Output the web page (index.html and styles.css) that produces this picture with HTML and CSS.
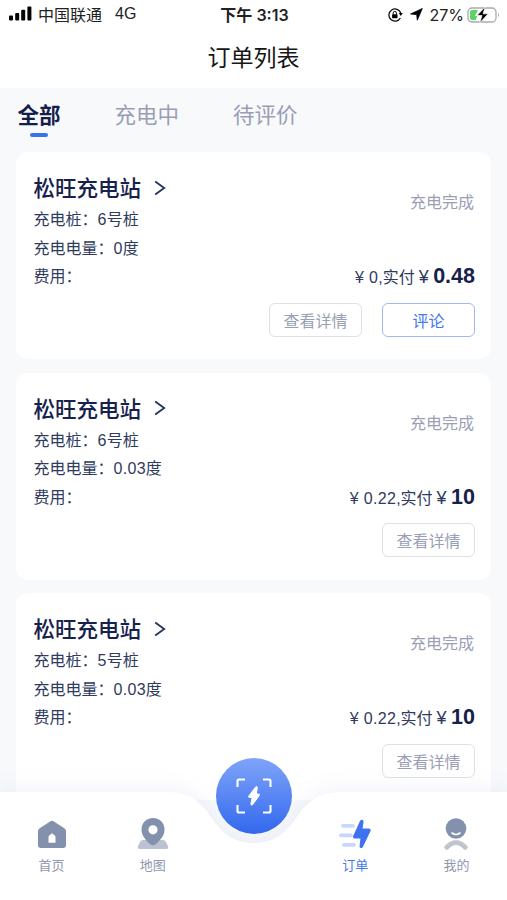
FILE: index.html
```html
<!DOCTYPE html>
<html lang="zh-CN">
<head>
<meta charset="utf-8">
<meta name="viewport" content="width=device-width, initial-scale=1">
<title>订单列表</title>
<link rel="stylesheet" href="styles.css">
</head>
<body>
<div class="app">
  <header class="statusbar">
    <div class="status-left">
      <svg class="signal" width="23" height="15" viewBox="0 0 23 15"><rect x="0" y="9.5" width="4" height="5" rx="1"/><rect x="6.2" y="7" width="4" height="7.5" rx="1"/><rect x="12.2" y="3.8" width="4" height="10.7" rx="1"/><rect x="18.4" y="0.5" width="4" height="14" rx="1"/></svg>
      <span class="carrier">中国联通</span><span class="network">4G</span>
    </div>
    <div class="clock">下午 3:13</div>
    <div class="status-right">
      <svg width="15" height="14" viewBox="0 0 15 14"><path d="M12.8 5A6.1 6.1 0 1 0 12.4 10" fill="none" stroke="#111" stroke-width="1.3"/><path d="M10.8 5.1h4l-2 3z"/><rect x="4.1" y="6.2" width="5.4" height="4" rx=".6"/><path d="M5.2 6.5V5a1.6 1.6 0 0 1 3.2 0v1.5" fill="none" stroke="#111" stroke-width="1"/></svg>
      <svg class="arrow" width="13" height="13" viewBox="0 0 13 13"><path d="M12.3.5 7.3 12.2 6.7 6.6 0.6 6z" stroke="#000" stroke-width=".8" stroke-linejoin="round"/></svg>
      <span class="percent">27%</span>
      <svg class="battery" width="33" height="18" viewBox="0 0 33 18"><rect x="1" y="2" width="28" height="14" rx="4" fill="#fff" stroke="#aaa" stroke-width="1.3"/><path d="M31 6.7q2 2.3 0 4.6z" fill="#aaa"/><path d="M5 4h6L8 10h2l-1 4H5q-2 0-2-2V6q0-2 2-2z" fill="#5bd36a"/><path d="M18.3.8 10 9.5h5L12.8 17l8.3-9.2H16z" stroke="#fff" stroke-width=".7"/></svg>
    </div>
  </header>
  <h1 class="title">订单列表</h1>
  <main class="content">
    <nav class="tabs"><span class="tab active">全部</span><span class="tab">充电中</span><span class="tab">待评价</span></nav>
    <section class="orders">
      <article class="card">
        <div class="card-head">
          <h2>松旺充电站<svg class="chevron" width="12" height="16" viewBox="0 0 12 16"><path d="m1.2 1.5 9 6.5-9 6.5"/></svg></h2>
          <span class="state">充电完成</span>
        </div>
        <p class="row">充电桩：<span class="num">6</span>号桩</p>
        <p class="row">充电电量：<span class="num">0</span>度</p>
        <div class="row fee"><span>费用：</span><span class="amount"><span class="yen">¥</span><span class="num">0</span>,实付<span class="yen paid">¥</span><b>0.48</b></span></div>
        <div class="actions"><button>查看详情</button><button class="primary">评论</button></div>
      </article>
      <article class="card">
        <div class="card-head">
          <h2>松旺充电站<svg class="chevron" width="12" height="16" viewBox="0 0 12 16"><path d="m1.2 1.5 9 6.5-9 6.5"/></svg></h2>
          <span class="state">充电完成</span>
        </div>
        <p class="row">充电桩：<span class="num">6</span>号桩</p>
        <p class="row">充电电量：<span class="num">0.03</span>度</p>
        <div class="row fee"><span>费用：</span><span class="amount"><span class="yen">¥</span><span class="num">0.22</span>,实付<span class="yen paid">¥</span><b>10</b></span></div>
        <div class="actions"><button>查看详情</button></div>
      </article>
      <article class="card">
        <div class="card-head">
          <h2>松旺充电站<svg class="chevron" width="12" height="16" viewBox="0 0 12 16"><path d="m1.2 1.5 9 6.5-9 6.5"/></svg></h2>
          <span class="state">充电完成</span>
        </div>
        <p class="row">充电桩：<span class="num">5</span>号桩</p>
        <p class="row">充电电量：<span class="num">0.03</span>度</p>
        <div class="row fee"><span>费用：</span><span class="amount"><span class="yen">¥</span><span class="num">0.22</span>,实付<span class="yen paid">¥</span><b>10</b></span></div>
        <div class="actions"><button>查看详情</button></div>
      </article>
    </section>
  </main>
  <footer class="bottombar">
    <svg class="bar-shape" width="507" height="160" viewBox="0 0 507 160"><path d="M0 52H165C190 52 201 62 211 77C221 93 234 103 254 103C274 103 286 93 297 77C307 62 318 52 343 52H507V160H0z" fill="#fff"/></svg>
    <nav class="bar-items">
      <a class="item"><svg width="32" height="32" viewBox="0 0 32 32"><path d="M14.5 3.2q1.5-1 3 0l10.8 7q1.7 1.2 1.7 3V27q0 3-3 3H5q-3 0-3-3V13.2q0-1.8 1.7-3z" fill="#8391ad"/><path d="M12.5 24.8V19q0-1 1-1.8l2.5-2 2.5 2q1 .8 1 1.8v5.8z" fill="#fff"/></svg><span>首页</span></a>
      <a class="item"><svg width="32" height="32" viewBox="0 0 32 32"><path d="M6 22h20q2 0 3 2l2 4q1 3-2 3H3q-3 0-2-3l2-4q1-2 3-2z" fill="#bcc2d0"/><path d="M16 0C9 0 4.5 5.2 4.5 11.5c0 6 4 10.5 8.8 14.8q2.7 2.2 5.4 0C23.5 22 27.5 17.5 27.5 11.5 27.5 5.2 23 0 16 0z" fill="#8391ad"/><circle cx="16" cy="11.8" r="4.6" fill="#fff"/></svg><span>地图</span></a>
      <span></span>
      <a class="item selected"><svg width="32" height="32" viewBox="0 0 32 32"><g stroke="#c9d6fb" stroke-width="3.8" stroke-linecap="round"><path d="M4 7.8h10M2 17.3h10M5 26.8h10"/></g><path d="M21 3c1.2-2 3.8-1.2 3.5 1l-.9 6.6h6.3c1.7 0 2.2 1.5 1.4 3L24 28.8c-1.2 2.2-3.7 1.2-3.4-1l.8-7.3h-5.6c-1.7 0-2.2-1.5-1.4-3z" fill="#3f72f1"/></svg><span>订单</span></a>
      <a class="item"><svg width="32" height="32" viewBox="0 0 32 32"><circle cx="16" cy="10.5" r="10.3" fill="#8391ad"/><path d="M12 15q4 3 8 0" fill="none" stroke="#fff" stroke-width="1.6" stroke-linecap="round"/><path d="M6.8 29.3q9.2-9.2 18.4 0" fill="none" stroke="#c0c4cd" stroke-width="4.8" stroke-linecap="round"/></svg><span>我的</span></a>
    </nav>
    <div class="scan"><svg width="38" height="38" viewBox="0 0 38 38" fill="none"><path d="M2.5 10V4q0-1.5 1.5-1.5h6M28 2.5h6q1.5 0 1.5 1.5v6M2.5 28v6q0 1.5 1.5 1.5h6M28 35.5h6q1.5 0 1.5-1.5v-6" stroke="#fff" stroke-width="2.1"/><path d="M20.8 9.8 13.8 19q-.8 1.5 1 1.5h2.4l-1.3 6.3q0 2.2 1.8.8l6.6-9.1q.8-1.5-1-1.5h-2l1-6q0-2.2-1.5-1.2z" fill="#fff" stroke="#fff" stroke-width="1" stroke-linejoin="round"/></svg></div>
  </footer>
</div>
</body>
</html>
```
FILE: styles.css
```css
* { box-sizing: border-box; }
body { margin: 0; background: #fff; font-family: "Liberation Sans", "Noto Sans CJK SC", sans-serif; color: #303b5d; }
.app { position: relative; width: 507px; height: 900px; overflow: hidden; }
.statusbar { display: grid; grid-template-columns: 1fr auto 1fr; align-items: center; height: 29px; padding: 0 7px 0 9px; font-size: 16px; color: #222; }
.status-left, .status-right { display: flex; align-items: center; }
.status-right { justify-content: flex-end; }
.signal { margin: 0 6px 2px 0; }
.carrier, .network { margin-top: -1px; }
.network { margin-left: 13px; }
.clock { margin-top: -2px; font-weight: 600; font-family: Inter, "Noto Sans CJK SC", sans-serif; font-size: 16px; }
.arrow { margin: 0 6px 0 7px; }
.percent { font-family: Inter, sans-serif; }
.battery { margin-left: 3px; }
.title { margin: 0; height: 59px; line-height: 58px; text-align: center; font-size: 23px; font-weight: 400; color: #161616; }
.content { height: 812px; background: #f7f9fb; }
.tabs { display: flex; gap: 54px; height: 64px; padding: 10px 17.5px 0; font-size: 21.5px; line-height: 36px; color: #9a9db6; }
.tab { height: 40px; }
.active { color: #15204a; font-weight: 700; }
.active::after { content: ""; display: block; width: 18px; height: 4px; margin: -1px auto 0; border-radius: 2px; background: #3b70f0; }
.orders { display: flex; flex-direction: column; gap: 13.7px; padding: 0 16px; }
.card { height: 207px; flex: none; padding: 19px 16px 0 17.5px; border-radius: 12px; background: #fff; }
.card-head { display: flex; justify-content: space-between; height: 35px; }
.card h2 { display: flex; align-items: center; height: 31px; margin: 0; font-size: 21.5px; font-weight: 500; color: #16214c; }
.chevron { margin: 2px 0 0 13px; fill: none; stroke: #26315a; stroke-width: 1.8; }
.state { margin: 19px 1px 0 0; font-size: 16px; line-height: 25px; color: #9a9fb5; }
.row { margin: 0; font-size: 16px; height: 28.5px; line-height: 28.5px; white-space: nowrap; }
.num { letter-spacing: .3px; }
.fee { display: flex; justify-content: space-between; }
.yen { display: inline-block; width: 15px; text-align: left; padding-left: 1px; }
.paid { width: 18.5px; padding-left: 4px; font-size: 18px; }
.amount b { font-size: 21.5px; font-weight: 700; line-height: 20px; color: #17214a; }
.actions { display: flex; justify-content: flex-end; gap: 20px; margin-top: 11.2px; }
.actions button { width: 93px; height: 34px; padding: 0; border: 1.5px solid #dfe1e6; border-radius: 6px; background: #fff; color: #9a9fb5; font: 16px/30px "Noto Sans CJK SC", sans-serif; }
.actions .primary { border-color: #a0b7fa; color: #4677f0; }
.bottombar { position: absolute; left: 0; bottom: 0; width: 507px; height: 160px; }
.bar-shape { position: absolute; inset: 0; filter: drop-shadow(0 -4px 10px rgba(70, 90, 170, .07)); }
.bar-items { position: relative; display: grid; grid-template-columns: repeat(5, 1fr); padding: 78px 0 0 1px; }
.item { display: flex; flex-direction: column; align-items: center; font-size: 13px; line-height: 20px; color: #9298af; }
.item span { margin-top: 6px; }
.selected { color: #4677f0; }
.scan { position: absolute; left: 216px; top: 18px; display: grid; place-items: center; width: 76px; height: 76px; border-radius: 50%; background: linear-gradient(#7fa4f8, #3268ee); }
```
